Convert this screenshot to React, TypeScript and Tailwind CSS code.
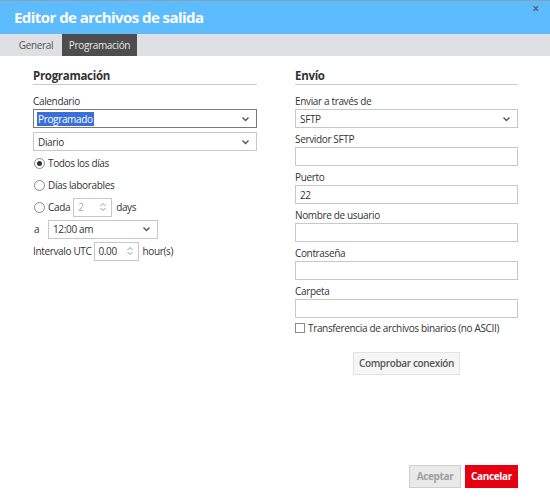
import React from 'react';

function Chevron() {
  return (
    <svg width="9" height="6" viewBox="0 0 9 6" className="shrink-0">
      <path d="M1.5 1.5 L4.5 4.5 L7.5 1.5" fill="none" stroke="#555" strokeWidth="1.4" />
    </svg>
  );
}

function Spin() {
  return (
    <svg width="8" height="10" viewBox="0 0 8 10" className="shrink-0">
      <path d="M1.5 4 L4 1.5 L6.5 4 M1.5 6 L4 8.5 L6.5 6" fill="none" stroke="#999" strokeWidth="1" />
    </svg>
  );
}

function Select({ value, focused, className = '' }: { value: string; focused?: boolean; className?: string }) {
  return (
    <div
      className={`h-[19px] flex items-center justify-between pl-[3px] pr-[6px] bg-white border ${
        focused ? 'border-[#7a7a7a]' : 'border-[#c8c8c8]'
      } ${className}`}
    >
      {focused ? (
        <span className="bg-[#3a6fd8] text-white leading-[14px] px-[1px]">{value}</span>
      ) : (
        <span className="leading-[14px] px-[1px]">{value}</span>
      )}
      <Chevron />
    </div>
  );
}

function Field({ label, value = '', select }: { label: string; value?: string; select?: boolean }) {
  return (
    <div className="flex flex-col mt-[4px]">
      <div className="leading-[14px]">{label}</div>
      {select ? (
        <Select value={value} className="mt-[1px]" />
      ) : (
        <div className="mt-[1px] h-[19px] border border-[#c8c8c8] bg-white flex items-center pl-[4px] leading-[14px]">
          {value}
        </div>
      )}
    </div>
  );
}

function Radio({ checked, children }: { checked?: boolean; children: React.ReactNode }) {
  return (
    <div className="h-[22px] flex items-center gap-[3px]">
      <span className="w-[11px] h-[11px] rounded-full border border-[#8a8a8a] bg-white flex items-center justify-center ml-[1px]">
        {checked && <span className="w-[5px] h-[5px] rounded-full bg-[#333]" />}
      </span>
      {children}
    </div>
  );
}

export default function App() {
  return (
    <div className="w-[550px] h-[502px] bg-white flex flex-col font-['Open_Sans',sans-serif] text-[10px] tracking-[-0.35px] text-[#333] overflow-hidden whitespace-nowrap">
      <div className="h-[34px] bg-[#5cbcfd] border-t border-[#8aa0b0] flex items-start justify-between shrink-0">
        <div className="pl-[14px] pt-[5px] text-white font-bold text-[15px] leading-[22px] tracking-[-0.55px]">
          Editor de archivos de salida
        </div>
        <div className="pr-[11px] pt-[1px] text-[#5a6570] text-[12px] leading-[14px] font-bold">×</div>
      </div>

      <div className="h-[22px] bg-[#dfe0e3] flex pl-[10px] shrink-0">
        <div className="w-[52px] flex items-center justify-center text-[#555]">General</div>
        <div className="w-[75px] flex items-center justify-center bg-[#4d4d4d] text-[#e6e6e6]">Programación</div>
      </div>

      <div className="flex-1 flex pl-[33px] pr-[32px] gap-[38px]">
        <div className="w-[224px] flex flex-col pt-[13px]">
          <div className="font-bold text-[11.5px] tracking-[-0.3px] leading-[14px] pb-[1px] border-b border-[#c8ccd0]">
            Programación
          </div>
          <div className="leading-[14px] mt-[9px]">Calendario</div>
          <Select value="Programado" focused className="mt-[1px]" />
          <Select value="Diario" className="mt-[4px]" />
          <div className="flex flex-col mt-[1px]">
            <Radio checked>Todos los días</Radio>
            <Radio>Días laborables</Radio>
            <Radio>
              <span>Cada</span>
              <span className="w-[39px] h-[19px] border border-[#c8c8c8] flex items-center justify-between pl-[4px] pr-[4px] text-[#aaa]">
                2
                <Spin />
              </span>
              <span className="ml-[1px]">days</span>
            </Radio>
            <div className="h-[22px] flex items-center">
              <span className="w-[15px] pl-[1px]">a</span>
              <Select value="12:00 am" className="w-[110px]" />
            </div>
            <div className="h-[22px] flex items-center gap-[3px]">
              <span>Intervalo UTC</span>
              <span className="w-[45px] h-[19px] border border-[#c8c8c8] flex items-center justify-between pl-[3px] pr-[4px]">
                0.00
                <Spin />
              </span>
              <span>hour(s)</span>
            </div>
          </div>
        </div>

        <div className="flex-1 flex flex-col pt-[13px]">
          <div className="font-bold text-[11.5px] tracking-[-0.3px] leading-[14px] pb-[1px] border-b border-[#c8ccd0]">
            Envío
          </div>
          <div className="mt-[5px] flex flex-col">
            <Field label="Enviar a través de" value="SFTP" select />
            <Field label="Servidor SFTP" />
            <Field label="Puerto" value="22" />
            <Field label="Nombre de usuario" />
            <Field label="Contraseña" />
            <Field label="Carpeta" />
          </div>
          <div className="h-[14px] mt-[3px] flex items-center gap-[3px]">
            <span className="w-[10px] h-[10px] border border-[#8a8a8a] bg-white" />
            <span className="leading-[14px]">Transferencia de archivos binarios (no ASCII)</span>
          </div>
          <div className="flex justify-center mt-[17px]">
            <button className="h-[23px] w-[107px] bg-[#f6f6f6] border border-[#e2e2e2] text-[#555] font-semibold">
              Comprobar conexión
            </button>
          </div>
        </div>
      </div>

      <div className="flex justify-end gap-[4px] pr-[32px] pb-[14px] shrink-0">
        <button className="h-[23px] w-[52px] bg-[#e9e9e9] border border-[#cfcfcf] text-[#a0a0a0] font-bold">Aceptar</button>
        <button className="h-[23px] w-[53px] bg-[#e60012] text-white font-bold">Cancelar</button>
      </div>
    </div>
  );
}
